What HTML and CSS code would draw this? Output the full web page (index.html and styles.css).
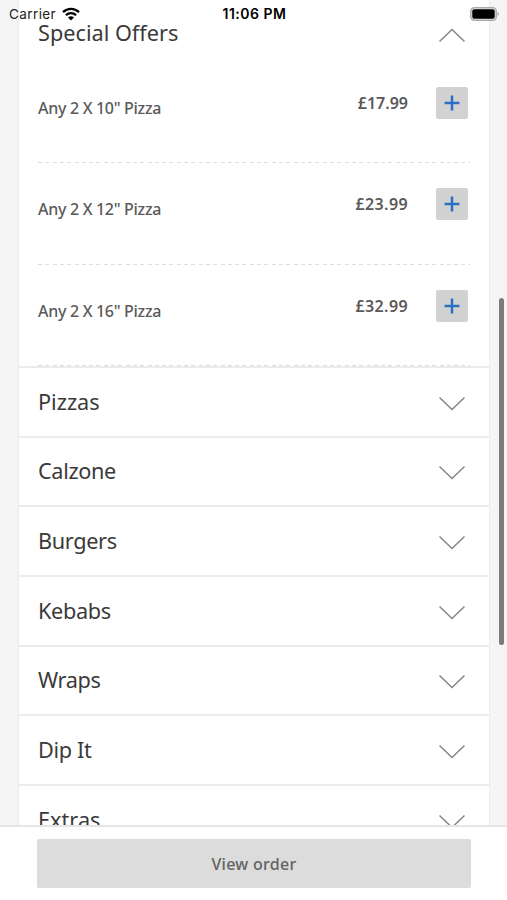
FILE: index.html
```html
<!DOCTYPE html>
<html lang="en">
<head>
<meta charset="utf-8">
<title>Menu</title>
<link rel="stylesheet" href="styles.css">
</head>
<body>
<svg class="defs" aria-hidden="true">
  <symbol id="chevron" viewBox="0 0 28 16"><path d="M1.500 1.500 14 13.500 26.500 1.500" fill="none" stroke="#858585" stroke-width="1.500"/></symbol>
  <symbol id="plus" viewBox="0 0 16 16"><path d="M8 .6V15.400M.6 8H15.400" fill="none" stroke="#2b6fc4" stroke-width="2.500"/></symbol>
</svg>
<div class="screen">
  <header class="status">
    <div class="carrier"><span>Carrier</span>
      <svg class="wifi" viewBox="0 0 18 14"><path d="M1 5.200A11.500 11.500 0 0 1 17 5.200M3.900 8.200A7.300 7.300 0 0 1 14.100 8.200" fill="none" stroke="#000" stroke-width="2.300"/><path d="M9 13.600 6 10.600A4.400 4.400 0 0 1 12 10.600Z"/></svg>
    </div>
    <div class="time">11:06 PM</div>
    <svg class="battery" viewBox="0 0 30 14"><rect x=".7" y=".7" width="25.600" height="12.600" rx="3.600" fill="#ddd" stroke="#aaa" stroke-width="1.300"/><rect x="2.300" y="2.300" width="22.400" height="9.400" rx="2"/><path d="M27.500 4.800q3 2.200 0 4.400z" fill="#aaa"/></svg>
  </header>
  <main class="menu">
    <section class="open">
      <div class="head"><h2>Special Offers</h2><svg class="chev up"><use href="#chevron"/></svg></div>
      <div class="item"><span class="name">Any 2 X 10" Pizza</span><span class="price">£17.99</span><button><svg><use href="#plus"/></svg></button></div>
      <div class="item"><span class="name">Any 2 X 12" Pizza</span><span class="price wide">£23.99</span><button><svg><use href="#plus"/></svg></button></div>
      <div class="item"><span class="name">Any 2 X 16" Pizza</span><span class="price wide">£32.99</span><button><svg><use href="#plus"/></svg></button></div>
    </section>
    <section class="row"><h2>Pizzas</h2><svg class="chev"><use href="#chevron"/></svg></section>
    <section class="row"><h2 class="tight">Calzone</h2><svg class="chev"><use href="#chevron"/></svg></section>
    <section class="row"><h2 class="tight">Burgers</h2><svg class="chev"><use href="#chevron"/></svg></section>
    <section class="row"><h2 class="tight">Kebabs</h2><svg class="chev"><use href="#chevron"/></svg></section>
    <section class="row"><h2 class="tight">Wraps</h2><svg class="chev"><use href="#chevron"/></svg></section>
    <section class="row"><h2 class="tight">Dip It</h2><svg class="chev"><use href="#chevron"/></svg></section>
    <section class="row"><h2>Extras</h2><svg class="chev"><use href="#chevron"/></svg></section>
  </main>
  <div class="thumb"></div>
  <footer class="bar"><button class="order">View order</button></footer>
</div>
</body>
</html>
```
FILE: styles.css
```css
* { box-sizing: border-box; }
body { margin: 0; background: #f5f5f5; font-family: "Noto Sans", sans-serif; }
.defs { position: absolute; width: 0; height: 0; }
.screen { position: relative; width: 507px; height: 900px; overflow: hidden; display: flex; flex-direction: column; }
.status { position: absolute; z-index: 2; inset: 0 0 auto 0; height: 27px; display: grid; grid-template-columns: 1fr auto 1fr; align-items: center; padding: 0 7px 0 9px; font-family: Inter, sans-serif; font-size: 13.500px; color: #000; }
.carrier { display: flex; align-items: center; gap: 6px; color: #222; letter-spacing: .4px; }
.wifi { width: 18px; height: 14px; }
.time { font-weight: 600; font-size: 14px; letter-spacing: .5px; }
.battery { width: 30px; height: 14px; justify-self: end; }
.menu { flex: 1; min-height: 0; overflow: hidden; width: 472px; margin-left: 18px; background: #fff; border: solid #ececec; border-width: 0 1px; }
.open { height: 366px; padding: 0 19px; }
.head { height: 62px; display: flex; justify-content: space-between; padding-top: 17px; padding-right: 4px; }
h2 { margin: 0; font-size: 21.700px; line-height: 32px; font-weight: 400; color: #3a3a3a; white-space: nowrap; }
.tight { letter-spacing: -.35px; }
.chev { width: 28px; height: 16px; flex: none; }
.up { margin-top: 10px; transform: rotate(180deg); }
.item { height: 101.400px; display: flex; align-items: flex-start; padding: 25px 2px 0 0; color: #5a5a5a; font-size: 16px; line-height: 32px;
  background: repeating-linear-gradient(90deg, #ddd 0 4px, transparent 4px 7.300px) 0 100% / 100% 1px no-repeat; }
.name { flex: 1; padding-top: 5px; white-space: nowrap; font-weight: 500; letter-spacing: -.3px; }
.price { font-weight: 600; margin-right: 28px; }
.wide { letter-spacing: .4px; }
.item button { width: 32px; height: 32px; border: 0; border-radius: 2px; background: #d2d2d2; padding: 0; display: grid; place-items: center; }
.item button svg { width: 16px; height: 16px; }
.row { height: 69.670px; border-top: 2px solid #ebebeb; display: flex; justify-content: space-between; align-items: center; padding: 0 23px 0 19px; }
.row .chev { margin-top: 4px; }
.thumb { position: absolute; z-index: 1; left: 499px; top: 298px; width: 5px; height: 347px; border-radius: 3px; background: #7b7b7b; }
.bar { height: 75px; flex: none; background: #fff; border-top: 2px solid #e5e5e5; padding: 12px 36px 0 37px; }
.order { display: block; width: 100%; height: 49px; border: 0; border-radius: 2px; background: #dcdcdc; color: #626262; font: 500 16px "Noto Sans", sans-serif; letter-spacing: .3px; }
```
